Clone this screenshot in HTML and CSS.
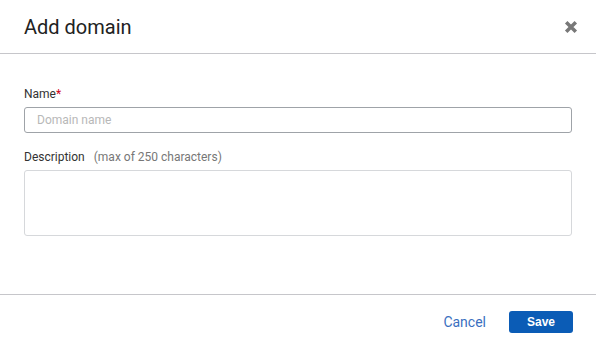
FILE: index.html
```html
<!DOCTYPE html>
<html lang="en">
<head>
<meta charset="utf-8">
<title>Add domain</title>
<link rel="stylesheet" href="styles.css">
</head>
<body>
<div class="dialog">
  <div class="header">
    <h1 class="title">Add domain</h1>
    <button class="close" aria-label="Close">
      <svg width="14" height="14" viewBox="0 0 14 14"><path d="M2.2 2.2 L11.8 11.8 M11.8 2.2 L2.2 11.8" stroke="#787878" stroke-width="3.5" stroke-linecap="butt"/></svg>
    </button>
  </div>
  <div class="body">
    <label class="label">Name<span class="req">*</span></label>
    <input class="input" type="text" placeholder="Domain name">
    <label class="label label-desc">Description <span class="hint">(max of 250 characters)</span></label>
    <textarea class="textarea"></textarea>
  </div>
  <div class="footer">
    <button class="cancel">Cancel</button>
    <button class="save">Save</button>
  </div>
</div>
</body>
</html>
```
FILE: styles.css
```css
html, body {
  margin: 0;
  padding: 0;
  background: #fff;
}
body {
  font-family: Roboto, "Liberation Sans", sans-serif;
  color: #333;
}
.dialog {
  width: 596px;
  height: 349px;
  display: flex;
  flex-direction: column;
}
.header {
  height: 53px;
  border-bottom: 1px solid #c6c6ca;
  display: flex;
  align-items: center;
  justify-content: space-between;
  padding: 0 18px 0 24px;
  box-sizing: content-box;
}
.title {
  margin: 0;
  font-size: 20px;
  font-weight: 400;
  color: #222;
  line-height: 24px;
}
.close {
  border: 0;
  background: none;
  padding: 0;
  width: 14px;
  height: 14px;
  display: block;
}
.close svg { display: block; }
.body {
  height: 240px;
  box-sizing: border-box;
  padding: 33px 24px 0 24px;
  display: flex;
  flex-direction: column;
}
.label {
  font-size: 12px;
  line-height: 14px;
  color: #333;
}
.req { color: #d0021b; }
.hint { color: #777; margin-left: 6px; }
.input {
  margin-top: 6px;
  height: 26px;
  box-sizing: border-box;
  border: 1px solid #9fa3a8;
  border-radius: 3px;
  padding: 0 12px;
  font-family: inherit;
  font-size: 12px;
  color: #333;
  outline: none;
}
.input::placeholder { color: #b8b8b8; }
.label-desc { margin-top: 17px; }
.textarea {
  margin-top: 6px;
  height: 66px;
  box-sizing: border-box;
  border: 1px solid #d6d8db;
  border-radius: 3px;
  resize: none;
  font-family: inherit;
  outline: none;
}
.footer {
  border-top: 1px solid #c6c6ca;
  display: flex;
  justify-content: flex-end;
  align-items: flex-start;
  padding: 16px 23px 0 0;
  gap: 23px;
}
.cancel {
  border: 0;
  background: none;
  padding: 0;
  height: 22px;
  font-family: Roboto, "Liberation Sans", sans-serif;
  font-size: 14px;
  color: #3a6fc0;
}
.save {
  width: 64px;
  height: 22px;
  border: 0;
  border-radius: 3px;
  background: #0b5cb6;
  color: #fff;
  font-family: "Liberation Sans", Arial, sans-serif;
  font-weight: 700;
  font-size: 12px;
  padding: 0;
}
```
